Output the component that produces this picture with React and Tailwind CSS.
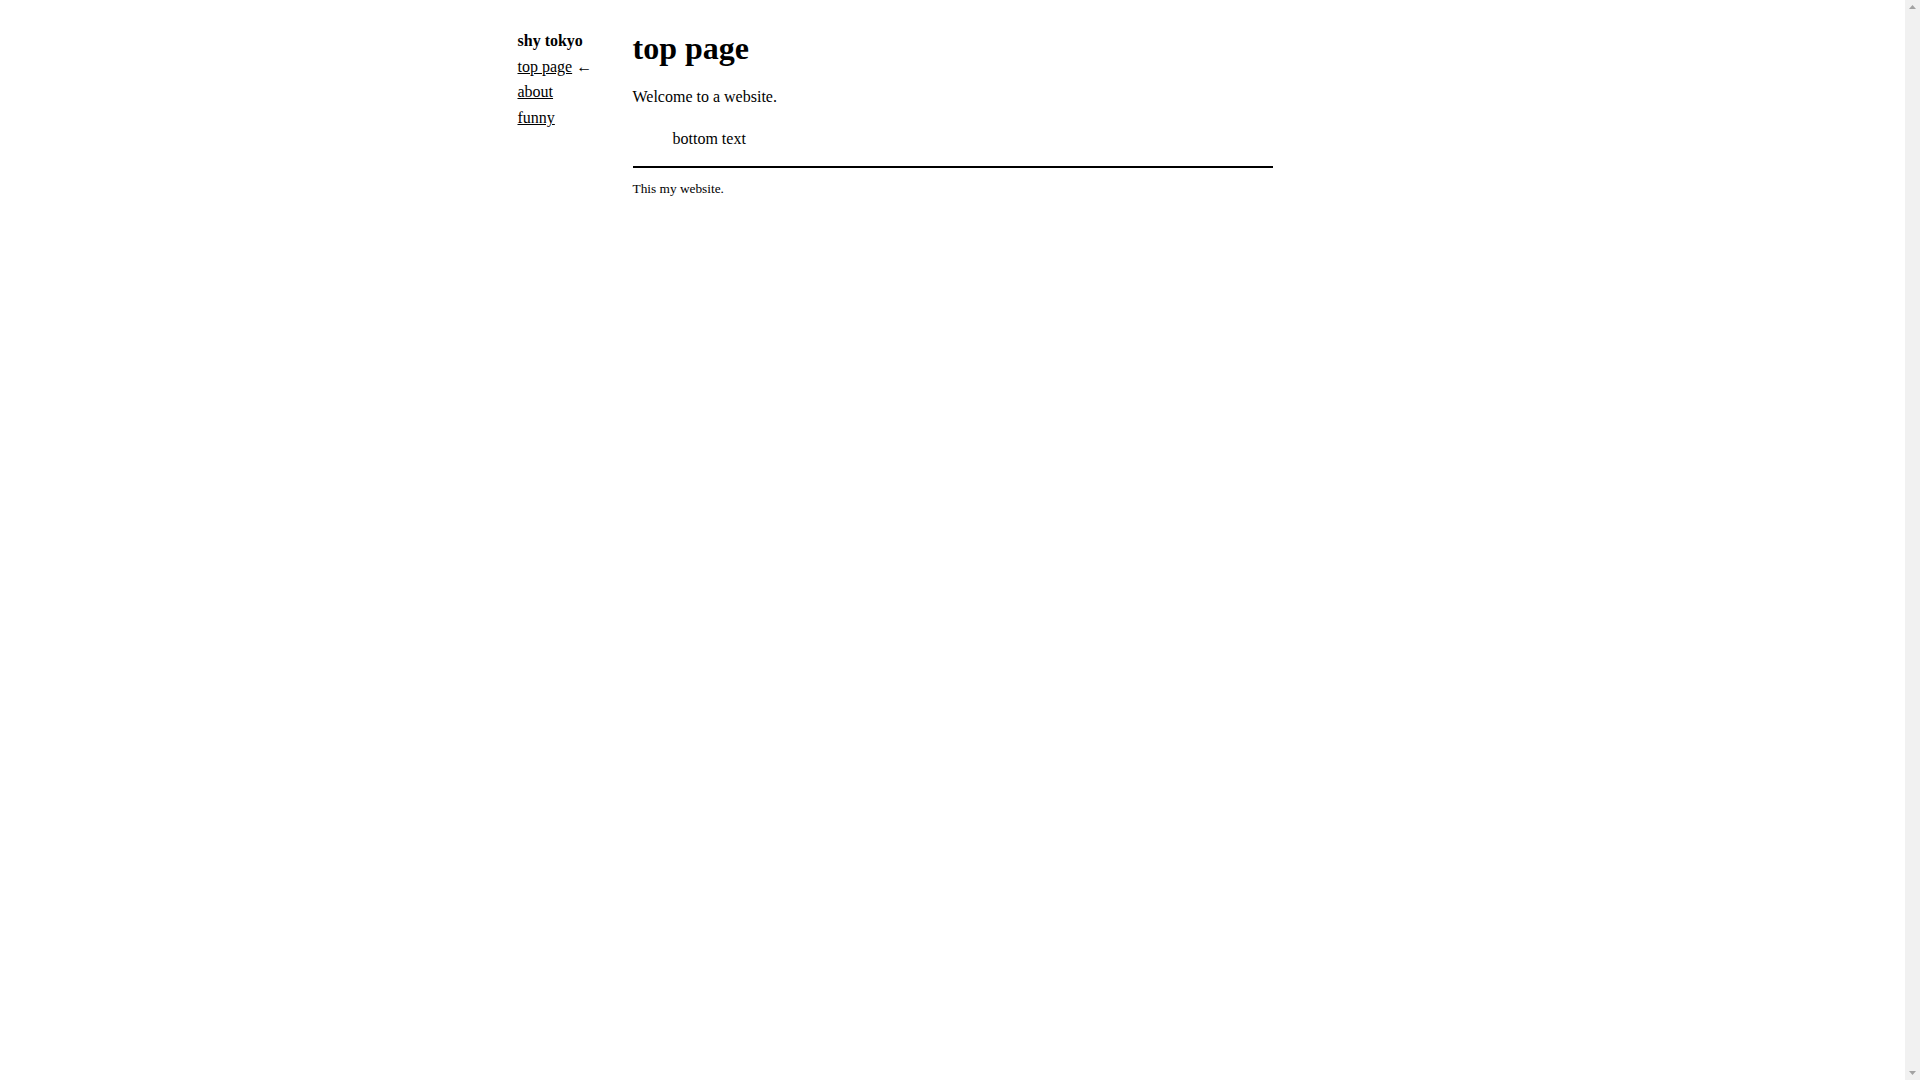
export default function App() {
  return (
    <div className="flex h-screen bg-white text-black font-['Liberation_Serif','Times_New_Roman',serif]">
      <div className="flex-1 overflow-hidden">
        <div className="grid grid-cols-[115px_640px_115px] justify-center pt-[28px]">
          <nav className="text-base leading-[25.6px]">
            <div className="font-bold">shy tokyo</div>
            <div>
              <a href="#" className="underline">
                top page
              </a>{" "}
              ←
            </div>
            <div>
              <a href="#" className="underline">
                about
              </a>
            </div>
            <div>
              <a href="#" className="underline">
                funny
              </a>
            </div>
          </nav>

          <main className="text-base leading-[25.6px]">
            <h1 className="text-[32px] font-bold leading-[41px] mb-[15px]">top page</h1>
            <p>Welcome to a website.</p>
            <blockquote className="mt-4 pl-10">bottom text</blockquote>
            <hr className="mt-[15px] border-0 h-[2px] bg-black" />
            <footer className="mt-[10px] text-[13.33px] leading-[21.33px]">This my website.</footer>
          </main>

          <div></div>
        </div>
      </div>

      {/* scrollbar track */}
      <div className="w-[15px] bg-[#f1f1f1] flex flex-col justify-between items-center py-[5px]">
        <svg width="7" height="4" viewBox="0 0 7 4">
          <path d="M3.5 0 L7 4 L0 4 Z" fill="#a3a3a3" />
        </svg>
        <svg width="7" height="4" viewBox="0 0 7 4">
          <path d="M0 0 L7 0 L3.5 4 Z" fill="#a3a3a3" />
        </svg>
      </div>
    </div>
  );
}
